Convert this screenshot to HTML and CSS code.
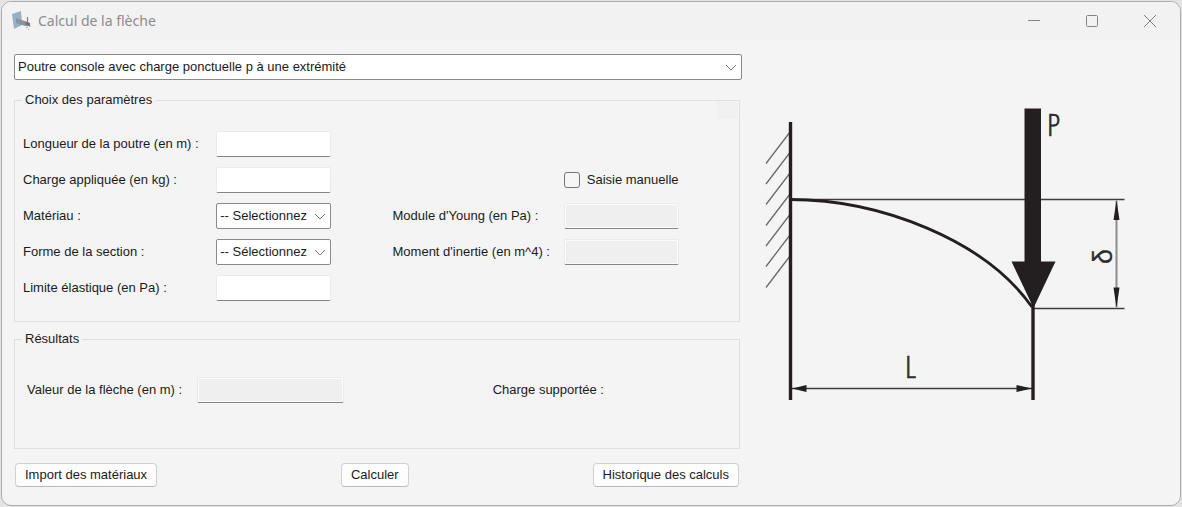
FILE: index.html
```html
<!DOCTYPE html>
<html lang="fr">
<head>
<meta charset="utf-8">
<meta name="viewport" content="width=device-width, initial-scale=1">
<title>Calcul de la flèche</title>
<link rel="stylesheet" href="styles.css">
</head>
<body>
<div class="window">
  <header class="titlebar">
    <svg class="app-icon" width="20" height="20" viewBox="0 0 20 20" aria-hidden="true">
      <path d="M0 3 L9 0 L10 14 L2 18 Z" fill="#9aafc4"/>
      <path d="M4 7 L10 9 L18 12 V15 L13 15 L4 12 Z" fill="#8792a3"/>
      <path d="M13 11 L18 12 V15 L14 14 Z" fill="#66718a"/>
      <path d="M15.500 6 V12" stroke="#d9622b" stroke-width="1.200"/>
      <path d="M14 16.500 h2 M17 15.500 h1.500 M16 18.500 h1" stroke="#b9b58e" stroke-width="1"/>
    </svg>
    <h1 class="title">Calcul de la flèche</h1>
    <div class="caption-buttons">
      <button class="caption-button" type="button" aria-label="Réduire">
        <svg width="14" height="14" viewBox="0 0 14 14"><path d="M1 6.500 H13"/></svg>
      </button>
      <button class="caption-button" type="button" aria-label="Agrandir">
        <svg width="14" height="14" viewBox="0 0 14 14"><rect x="1.500" y="1.500" width="11" height="11" rx="1"/></svg>
      </button>
      <button class="caption-button" type="button" aria-label="Fermer">
        <svg width="14" height="14" viewBox="0 0 14 14"><path d="M1 1 L13 13 M13 1 L1 13"/></svg>
      </button>
    </div>
  </header>

  <main class="content">
    <form class="form">
      <div class="select-box">
        <select class="select" aria-label="Type de poutre">
          <option>Poutre console avec charge ponctuelle p à une extrémité</option>
        </select>
        <svg class="chevron" width="12" height="8" viewBox="0 0 12 8" aria-hidden="true"><path d="M1 1 L6 6 L11 1"/></svg>
      </div>

      <fieldset class="group">
        <legend class="legend">Choix des paramètres</legend>
        <div class="corner-patch"></div>
        <div class="params">
          <label for="longueur">Longueur de la poutre (en m) :</label>
          <input class="text-box" id="longueur" type="text">

          <label class="first" for="charge">Charge appliquée (en kg) :</label>
          <input class="text-box" id="charge" type="text">
          <label class="check last"><input class="check-box" type="checkbox">Saisie manuelle</label>

          <label class="first" for="materiau">Matériau :</label>
          <div class="select-box short">
            <select class="select" id="materiau"><option>-- Selectionnez</option></select>
            <svg class="chevron" width="12" height="8" viewBox="0 0 12 8" aria-hidden="true"><path d="M1 1 L6 6 L11 1"/></svg>
          </div>
          <label for="young">Module d'Young (en Pa) :</label>
          <input class="text-box" id="young" type="text" disabled>

          <label class="first" for="forme">Forme de la section :</label>
          <div class="select-box short">
            <select class="select" id="forme"><option>-- Sélectionnez</option></select>
            <svg class="chevron" width="12" height="8" viewBox="0 0 12 8" aria-hidden="true"><path d="M1 1 L6 6 L11 1"/></svg>
          </div>
          <label for="inertie">Moment d'inertie (en m^4) :</label>
          <input class="text-box" id="inertie" type="text" disabled>

          <label class="first" for="limite">Limite élastique (en Pa) :</label>
          <input class="text-box" id="limite" type="text">
        </div>
      </fieldset>

      <fieldset class="group results-group">
        <legend class="legend">Résultats</legend>
        <div class="results">
          <label for="fleche">Valeur de la flèche (en m) :</label>
          <input class="text-box wide" id="fleche" type="text" disabled>
          <span>Charge supportée :</span>
        </div>
      </fieldset>

      <div class="actions">
        <button class="button" type="button">Import des matériaux</button>
        <button class="button" type="button">Calculer</button>
        <button class="button" type="button">Historique des calculs</button>
      </div>
    </form>

    <svg class="diagram" viewBox="765 108 360 292" role="img" aria-label="Poutre console de longueur L, charge P, flèche δ">
      <g class="hatch">
        <path d="M766 163.500 L790 132 M766 184 L790 152.500 M766 204.500 L790 173 M766 225.500 L790 194 M766 246 L790 214.500 M766 266.500 L790 235 M766 287.500 L790 256"/>
      </g>
      <path class="thin" d="M790 199.500 H1124.500 M1033 308.500 H1124.500 M792 388.500 H1032"/>
      <path class="soft" d="M1116.500 201 V307"/>
      <path class="bold" d="M790.500 122 V400 M1033 300 V400"/>
      <path class="beam" d="M790 199.500 C880 199.500 985 240 1032 307"/>
      <path class="solid" d="M1024.500 108.500 H1041 V261.500 H1055.500 L1033.500 308 L1011.500 261.500 H1024.500 Z"/>
      <path class="solid" d="M1116.500 200 L1119.500 220 H1113.500 Z M1116.500 308 L1119.500 287.500 H1113.500 Z M792 388.500 L806.500 385 V392 Z M1032 388.500 L1016.500 385 V392 Z"/>
      <text class="symbol" x="1047" y="136">P</text>
      <text class="symbol" x="905" y="378">L</text>
      <text class="delta" transform="translate(1112 264) rotate(-90)">δ</text>
    </svg>
  </main>
</div>
</body>
</html>
```
FILE: styles.css
```css
* { box-sizing: border-box; }

body {
  margin: 0;
  padding: 1px;
  background: #e4e4e4;
  color: #1b1b1b;
  font: 13px/18px "Liberation Sans", Arial, sans-serif;
}

button, input, select { font: inherit; color: inherit; }

.window {
  min-height: calc(100vh - 2px);
  border: 1px solid #acacac;
  border-radius: 10px;
  background: #f4f4f4;
  overflow: hidden;
}

.titlebar {
  display: flex;
  align-items: center;
  height: 38px;
  padding: 0 1px 0 10px;
  background: #f2f2f2;
}

.app-icon { flex: none; }

.title {
  flex: 1;
  margin: 0 0 0 6px;
  color: #8c8c8c;
  font: 14px/20px "Noto Sans", "Open Sans", sans-serif;
}

.caption-buttons { display: flex; }

.caption-button {
  display: grid;
  place-items: center;
  width: 58px;
  height: 38px;
  padding: 0;
  border: 0;
  background: none;
}

.caption-button svg { fill: none; stroke: #858585; }

.content {
  display: grid;
  grid-template-columns: minmax(0, 728fr) minmax(0, 360fr);
  column-gap: 23px;
  align-items: start;
  padding: 14px 55px 18px 12px;
}

.select-box { position: relative; height: 26px; }

.select {
  display: block;
  appearance: none;
  width: 100%;
  height: 100%;
  padding: 0 20px 0 3px;
  border: 1px solid #8a8a8a;
  border-radius: 2px;
  background: #fff;
}

.chevron {
  position: absolute;
  top: 10px;
  right: 5px;
  fill: none;
  stroke: #757575;
  pointer-events: none;
}

.group {
  position: relative;
  min-width: 0;
  margin: 11px 2px 0 0;
  padding: 17px 0 15px 8px;
  border: 1px solid #dfdfdf;
}

.legend { padding: 0 3px; margin-left: -1px; }

.corner-patch {
  position: absolute;
  top: -7px;
  right: 1px;
  width: 21px;
  height: 17px;
  background: #f0f0f0;
}

.params {
  display: grid;
  grid-template-columns: 193fr 176fr 171fr 175fr;
  grid-auto-rows: 36px;
  align-items: center;
}

.first { grid-column: 1; }
.last { grid-column: 4; }
.short { width: 115px; }

.text-box {
  width: 115px;
  height: 26px;
  padding: 0 4px;
  border: 1px solid #ebebeb;
  border-bottom-color: #868686;
  border-radius: 2px;
  background: #fff;
}

.text-box:disabled {
  background: #efefef;
  box-shadow: inset 0 0 0 1px #fcfcfc;
}

.text-box.wide { width: 147px; }

.check { display: flex; align-items: center; gap: 7px; }

.check-box {
  appearance: none;
  width: 16px;
  height: 16px;
  margin: 0;
  border: 1px solid #777;
  border-radius: 3px;
  background: #f6f6f6;
}

.check-box:checked { background: #0067c0; }

.results-group { margin-top: 8px; padding: 29px 0 45px 12px; }
.results-group .legend { margin-left: -5px; }

.results {
  display: grid;
  grid-template-columns: 170fr 295fr 246fr;
  align-items: center;
}

.actions {
  display: flex;
  justify-content: space-between;
  margin-top: 14px;
  padding: 0 3px 0 1px;
}

.button {
  height: 24px;
  padding: 0 9px;
  border: 1px solid #d0d0d0;
  border-bottom-color: #bbb;
  border-radius: 4px;
  background: #fdfdfd;
}

.diagram { display: block; width: 100%; margin-top: 54px; overflow: visible; }

.diagram path { fill: none; stroke: #231f20; }
.diagram .hatch path { stroke: #6b6b6b; stroke-width: 1.3; }
.diagram .thin { stroke: #3c3c3c; stroke-width: 1.3; }
.diagram .soft { stroke: #8c8c8c; stroke-width: 2; }
.diagram .bold { stroke-width: 3.4; }
.diagram .beam { stroke-width: 2.8; }
.diagram .solid { fill: #231f20; stroke: none; }

.symbol { fill: #2b2b2b; stroke: #2b2b2b; stroke-width: 0.6; font: 300 32px "Open Sans Condensed Light", "Open Sans Condensed", "Roboto Condensed", Roboto, sans-serif; }
.delta { fill: #2b2b2b; stroke: #2b2b2b; stroke-width: 0.3; font: 27px "Liberation Sans", sans-serif; }
```
